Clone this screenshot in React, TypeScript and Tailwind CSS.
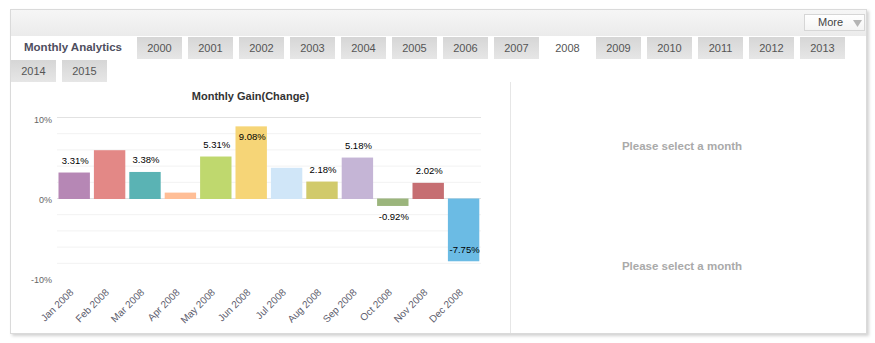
import React from 'react';

const YEARS = [
  '2000', '2001', '2002', '2003', '2004', '2005', '2006', '2007',
  '2008', '2009', '2010', '2011', '2012', '2013', '2014', '2015',
];

const MONTHS = [
  { name: 'Jan 2008', value: 3.31, color: '#b687b5', label: 'top' },
  { name: 'Feb 2008', value: 6.1, color: '#e38886', label: 'none' },
  { name: 'Mar 2008', value: 3.38, color: '#5ab3b4', label: 'top' },
  { name: 'Apr 2008', value: 0.8, color: '#ffbe96', label: 'none' },
  { name: 'May 2008', value: 5.31, color: '#bfd86e', label: 'top' },
  { name: 'Jun 2008', value: 9.08, color: '#f6d577', label: 'inside' },
  { name: 'Jul 2008', value: 3.9, color: '#d0e6f8', label: 'none' },
  { name: 'Aug 2008', value: 2.18, color: '#d1ca6b', label: 'top' },
  { name: 'Sep 2008', value: 5.18, color: '#c5b5d6', label: 'top' },
  { name: 'Oct 2008', value: -0.92, color: '#9bb57c', label: 'below' },
  { name: 'Nov 2008', value: 2.02, color: '#c66e72', label: 'top' },
  { name: 'Dec 2008', value: -7.75, color: '#6bbbe4', label: 'inside' },
];

// chart geometry in page coordinates (svg viewBox starts at the column origin)
const ZERO = 198.5;
const GRID_STEP = 16.2;
const BAR_X0 = 58.5;
const BAR_PITCH = 35.4;
const BAR_W = 31.4;

const GainChart: React.FC = () => {
  const gridLines = [10, 8, 6, 4, 2, 0, -2, -4, -6, -8];

  return (
    <svg width={500} height={251} viewBox="11 82 500 251" className="block font-['Liberation_Sans',Arial,sans-serif]">
      <text x={250.5} y={100} textAnchor="middle" className="fill-[#333333] text-[11px] font-bold">
        Monthly Gain(Change)
      </text>

      {gridLines.map(v => {
        const y = ZERO - (v / 2) * GRID_STEP;
        const strong = v === 10 || v === 0;
        return (
          <line key={v} x1={57} x2={481} y1={y} y2={y} stroke={strong ? '#e2e2e2' : '#f2f2f2'} strokeWidth={1} />
        );
      })}

      <g className="fill-[#666666] text-[9px]" textAnchor="end">
        <text x={52} y={123}>10%</text>
        <text x={52} y={203}>0%</text>
        <text x={52} y={283}>-10%</text>
      </g>

      {MONTHS.map((m, i) => {
        const x = BAR_X0 + i * BAR_PITCH;
        const cx = x + BAR_W / 2;
        const pos = m.value >= 0;
        const h = pos ? m.value * 8.0 : -m.value * 8.1;
        const y = pos ? 199 - h : ZERO;
        const top = y;
        const bottom = y + h;
        let ly = 0;
        if (m.label === 'top') ly = top - 9;
        if (m.label === 'inside') ly = pos ? top + 14 : bottom - 8.5;
        if (m.label === 'below') ly = bottom + 14.5;
        return (
          <g key={m.name}>
            <rect x={x} y={y} width={BAR_W} height={h} fill={m.color} />
            {m.label !== 'none' && (
              <text x={cx + 1} y={ly} textAnchor="middle" className="fill-black text-[9.5px]">
                {m.value.toFixed(2)}%
              </text>
            )}
            <text
              x={cx}
              y={293}
              textAnchor="end"
              transform={`rotate(-45 ${cx} 293)`}
              className="fill-[#5c5c6c] text-[10px]"
            >
              {m.name}
            </text>
          </g>
        );
      })}
    </svg>
  );
};

const Tab: React.FC<{ label: string; active?: boolean }> = ({ label, active }) => (
  <div
    className={
      active
        ? 'w-[45px] h-[22px] mr-[6px] flex items-center justify-center bg-white text-[11px] text-[#555555]'
        : 'w-[45px] h-[22px] mr-[6px] flex items-center justify-center bg-gradient-to-b from-[#d6d6d6] to-[#e6e6e6] text-[11px] text-[#555555]'
    }
  >
    {label}
  </div>
);

export default function App() {
  return (
    <div className="w-[875px] h-[343px] bg-white pt-[9px] pl-[10px] font-['Liberation_Sans',Arial,sans-serif]">
      <div className="w-[857px] border border-[#dadada] bg-white shadow-[2px_2px_3px_rgba(0,0,0,0.18)]">
        {/* header bar */}
        <div className="h-[26px] bg-gradient-to-b from-[#f6f6f6] to-[#ebebeb] flex justify-end items-start pt-[4px] pr-[1px]">
          <div className="w-[61px] h-[17px] border border-[#d6d6d6] bg-gradient-to-b from-white to-[#f4f4f4] flex items-center pl-[13px]">
            <span className="text-[11px] text-[#444444]">More</span>
            <svg width="9" height="8" viewBox="0 0 9 8" className="ml-[10px]">
              <polygon points="0,1 9,1 4.5,8" fill="#b4b4b4" />
            </svg>
          </div>
        </div>

        {/* tabs */}
        <div className="flex flex-wrap gap-y-[1px] pt-[1px]">
          <div className="w-[124px] h-[22px] mr-[2px] flex items-center justify-center bg-white text-[11.5px] font-bold text-[#4e4e5e]">
            Monthly Analytics
          </div>
          {YEARS.map(y => (
            <Tab key={y} label={y} active={y === '2008'} />
          ))}
        </div>

        {/* content */}
        <div className="flex h-[251px]">
          <div className="w-[500px] border-r border-[#e6e6e6]">
            <GainChart />
          </div>
          <div className="flex-1 flex flex-col pt-[5px] pr-[13px]">
            <div className="h-[120px] flex items-center justify-center text-[11.5px] font-bold text-[#aaaaaa]">
              Please select a month
            </div>
            <div className="h-[120px] flex items-center justify-center text-[11.5px] font-bold text-[#aaaaaa]">
              Please select a month
            </div>
          </div>
        </div>
      </div>
    </div>
  );
}
